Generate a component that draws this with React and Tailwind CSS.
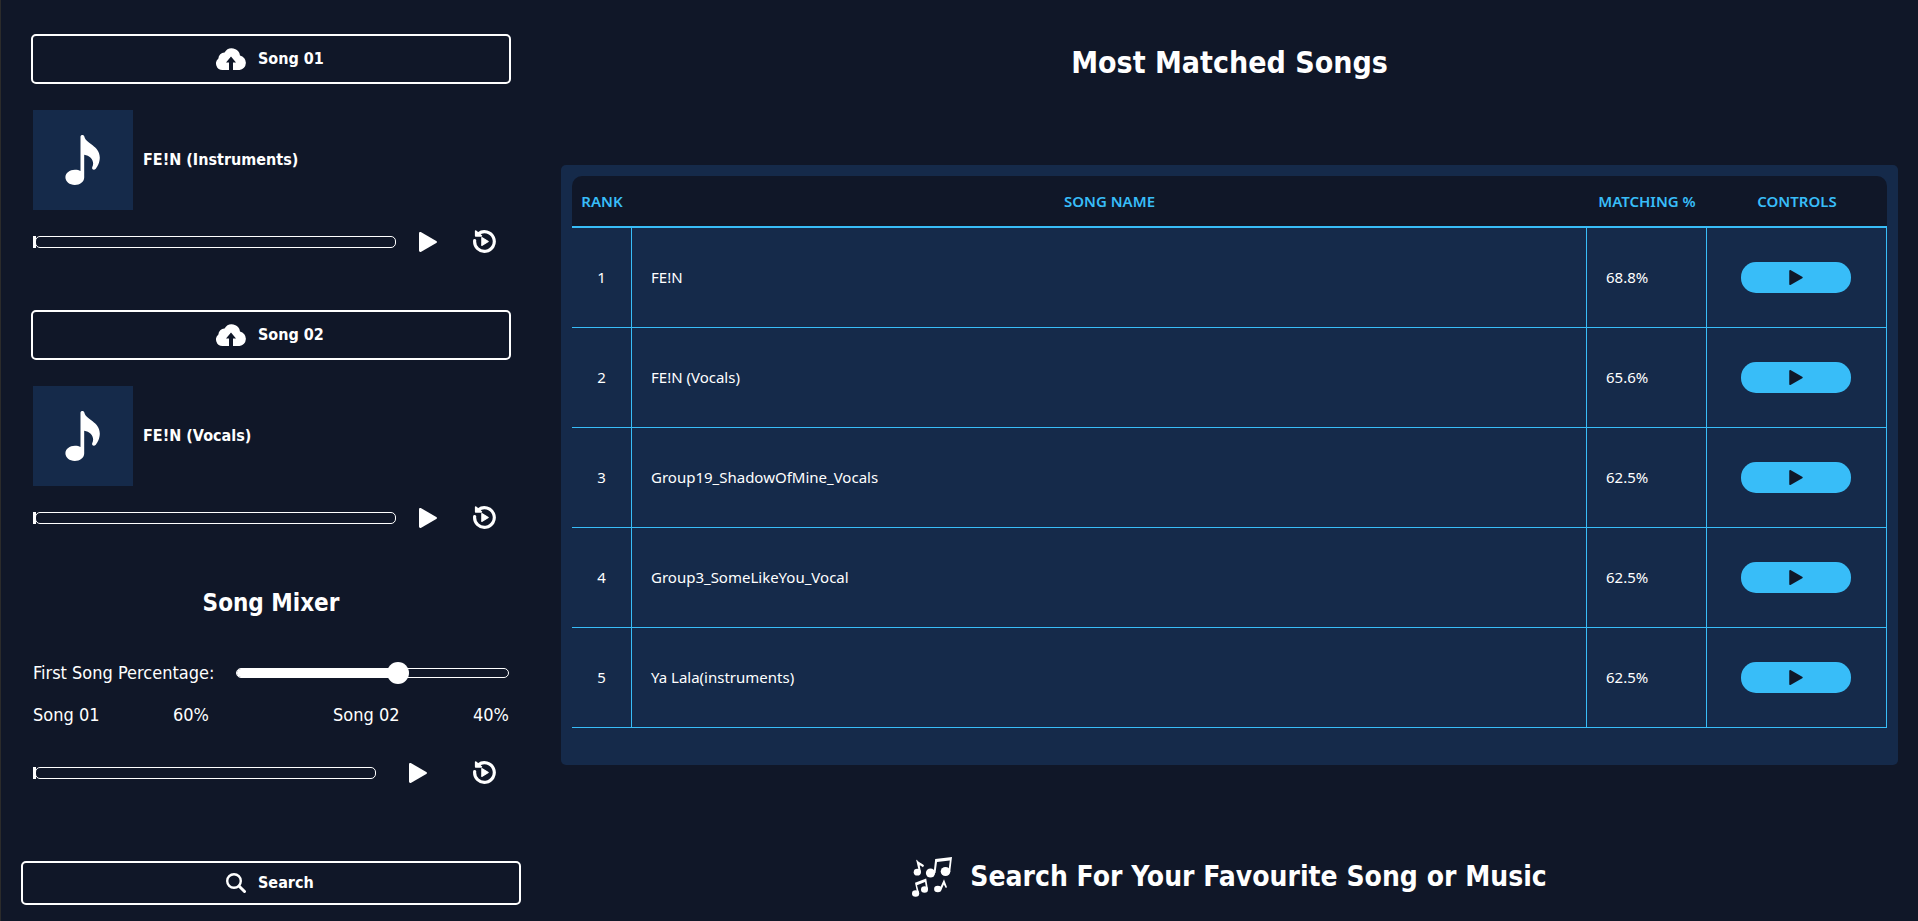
import { useState } from "react";

const FONT_UI = "font-['DejaVu_Sans_Condensed','DejaVu_Sans',sans-serif]";

const SONGS = [
  { name: "FE!N", match: "68.8%" },
  { name: "FE!N (Vocals)", match: "65.6%" },
  { name: "Group19_ShadowOfMine_Vocals", match: "62.5%" },
  { name: "Group3_SomeLikeYou_Vocal", match: "62.5%" },
  { name: "Ya Lala(instruments)", match: "62.5%" },
];

function CloudUploadIcon() {
  return (
    <svg aria-hidden="true" viewBox="0 0 30 22" className="h-[22px] w-[30px]" fill="currentColor">
      <path d="M13 22H6.5A6.5 6.5 0 0 1 2.4 10.5 6 6 0 0 1 8.6 4.6 8.2 8.2 0 0 1 24 7.6 7.3 7.3 0 0 1 23.5 22H17V14.5H20L15 8.5 10 14.5H13Z" />
    </svg>
  );
}

function NoteIcon() {
  return (
    <svg aria-hidden="true" viewBox="0 0 36 50" className="h-[50px] w-9" fill="currentColor">
      <path d="M15.5 1.8C15.5-.4 19-.6 19.4 1.8C21 9 34.8 10.500 34.800 22.500C34.800 27.500 32.500 31.500 30.800 33.700C29 35.800 26.300 34.500 27.300 32C30 26.500 26 20.800 19.200 19.800V42.500C19.200 46.800 15 50 9.800 50C4.500 50 .4 46.700 .4 42.300C.4 38 4.700 34.800 9.900 34.800C12.200 34.800 14.200 35.200 15.500 36Z" />
    </svg>
  );
}

function PlayIcon({ className }) {
  return (
    <svg aria-hidden="true" viewBox="0 0 18 20" className={className} fill="currentColor">
      <path d="M0 1.400C0 .2 1.100-.3 2.200 .3L17.300 9Q18.700 10 17.300 11L2.200 19.700C1.100 20.300 0 19.800 0 18.600Z" />
    </svg>
  );
}

function RestartIcon() {
  return (
    <svg aria-hidden="true" viewBox="0 0 22 22" className="size-[23px]">
      <path d="M1.600 10A9.400 9.400 0 1 0 5.200 3.600" fill="none" stroke="currentColor" strokeWidth="3" strokeLinecap="round" />
      <path d="M2.600 1V5.600H8Z" fill="currentColor" stroke="currentColor" strokeWidth="1.600" strokeLinejoin="round" />
      <path d="M8.400 7.200 14.600 11 8.400 14.800Z" fill="currentColor" stroke="currentColor" strokeLinejoin="round" />
    </svg>
  );
}

function SearchIcon() {
  return (
    <svg aria-hidden="true" viewBox="0 0 20 20" className="size-5" fill="none" stroke="currentColor" strokeLinecap="round">
      <circle cx="8" cy="8" r="6.800" strokeWidth="2.400" />
      <path d="M13.200 13.200 18.500 18.500" strokeWidth="3" />
    </svg>
  );
}

function NotesIcon() {
  return (
    <svg aria-hidden="true" viewBox="0 0 40 40" className="size-10" fill="currentColor">
      <ellipse cx="18.500" cy="16" rx="4.600" ry="4.600" />
      <ellipse cx="33.500" cy="14.500" rx="4.800" ry="4.600" />
      <path d="M21.600 16 23.200 2 40 0 38.200 15H36.300L37.800 3.400 25 5 23.500 16Z" />
      <ellipse cx="5.300" cy="15.200" rx="3.600" ry="3.400" />
      <path d="M7 15 4.200 3 5 2.800C6 5.500 10 6 12 8.500L11 10.200C9.500 9 8.500 8.500 7.700 8.500L8.900 15Z" />
      <ellipse cx="3.600" cy="36.500" rx="3.600" ry="3.300" />
      <ellipse cx="12.500" cy="32.500" rx="3.500" ry="3.300" />
      <path d="M5.300 36.500 3 25.800 14.200 21.500 16 32.500H14.300L13 25 5 28.200 7.200 36.500Z" />
      <ellipse cx="25.800" cy="32" rx="3.700" ry="3.200" />
      <path d="M27.800 31.500 32 22.300 35 30.300 33.800 31 31.800 27.500 29.500 32.800Z" />
    </svg>
  );
}

function Transport({ label, wide }) {
  return (
    <div className="flex items-center">
      <div className="flex h-3 flex-1" role="progressbar" aria-label={label} aria-valuenow={0} aria-valuemin={0} aria-valuemax={100}>
        <div className="-mr-px w-[3px] bg-white" />
        <div className="flex-1 rounded-[5px] border border-white" />
      </div>
      <button type="button" aria-label={`Play ${label}`} className={wide ? "ml-[23px] mr-9" : "ml-[33px] mr-[46px]"}>
        <PlayIcon className="h-5 w-[18px]" />
      </button>
      <button type="button" aria-label={`Restart ${label}`} className="mr-[13px]">
        <RestartIcon />
      </button>
    </div>
  );
}

function SongSlot({ label, title }) {
  return (
    <section className="px-[10px]">
      <button type="button" className="flex h-[50px] w-full items-center gap-3 rounded-[5px] border-2 border-white pl-[183px] font-bold">
        <CloudUploadIcon />
        {label}
      </button>
      <div className="px-0.5">
        <div className="mt-[26px] flex items-center gap-[10px]">
          <div className="flex size-[100px] items-center justify-center bg-[#152a4a]">
            <NoteIcon />
          </div>
          <h3 className="font-bold">{title}</h3>
        </div>
        <div className="mt-5">
          <Transport label={title} wide />
        </div>
      </div>
    </section>
  );
}

export default function App() {
  const [mix, setMix] = useState(60);

  return (
    <div className={`flex min-h-screen gap-10 border-l border-[#2b2b2b] bg-[#101728] pl-5 pr-5 text-base text-white ${FONT_UI}`}>
      <aside className="flex w-[500px] shrink-0 flex-col pb-4 pt-[34px]">
        <SongSlot label="Song 01" title="FE!N (Instruments)" />
        <div className="mt-[57px]">
          <SongSlot label="Song 02" title="FE!N (Vocals)" />
        </div>

        <section className="px-3">
          <h2 className="mt-[58px] text-center text-2xl font-bold">Song Mixer</h2>
          <div className="mt-[42px] flex items-center gap-[22px]">
            <label htmlFor="mix" className="w-[181px] whitespace-nowrap text-[18px] leading-6">First Song Percentage:</label>
            <div className="relative flex h-[22px] flex-1 items-center">
              <div className="h-[10px] w-full overflow-hidden rounded-[5px] border border-white">
                <div className="h-full bg-white" style={{ width: `${mix}%` }} />
              </div>
              <input
                id="mix"
                type="range"
                min="0"
                max="100"
                value={mix}
                onChange={(e) => setMix(Number(e.target.value))}
                className="absolute inset-0 h-full w-full appearance-none bg-transparent [&::-webkit-slider-thumb]:size-[22px] [&::-webkit-slider-thumb]:appearance-none [&::-webkit-slider-thumb]:rounded-full [&::-webkit-slider-thumb]:bg-white"
              />
            </div>
          </div>
          <div className="mt-[18px] flex justify-between text-[18px] leading-6">
            <div className="flex w-[176px] justify-between">
              <span>Song 01</span>
              <span>{mix}%</span>
            </div>
            <div className="flex w-[176px] justify-between">
              <span>Song 02</span>
              <span>{100 - mix}%</span>
            </div>
          </div>
          <div className="mt-[34px]">
            <Transport label="Mix" />
          </div>
        </section>

        <button type="button" className="mt-auto flex h-11 items-center gap-3 rounded-[5px] border-2 border-white pl-[203px] font-bold">
          <SearchIcon />
          Search
        </button>
      </aside>

      <main className="flex flex-1 flex-col pb-6 pt-[43px]">
        <h1 className="text-center text-[30px] font-bold leading-10">Most Matched Songs</h1>

        <div className="mt-[82px] h-[600px] rounded-[5px] bg-[#152a4a] p-[11px] font-['Noto_Sans',sans-serif] text-[15px]">
          <table className="w-full table-fixed border-separate border-spacing-0">
            <thead>
              <tr className="h-[52px] text-[#38bdf8] [&>th]:border-b-2 [&>th]:border-[#38bdf8] [&>th]:bg-[#101728] [&>th]:p-0 [&>th]:font-semibold">
                <th className="w-[60px] rounded-tl-[10px]">RANK</th>
                <th>SONG NAME</th>
                <th className="w-[120px]">MATCHING %</th>
                <th className="w-[180px] rounded-tr-[10px]">CONTROLS</th>
              </tr>
            </thead>
            <tbody>
              {SONGS.map((song, i) => (
                <tr key={song.name} className="h-[100px] [&>td]:border-b [&>td]:border-r [&>td]:border-[#38bdf8]">
                  <td className="text-center">{i + 1}</td>
                  <td className="pl-[19px]">{song.name}</td>
                  <td className="pl-[19px]">{song.match}</td>
                  <td className="pr-0.5">
                    <button type="button" aria-label={`Play ${song.name}`} className="mx-auto flex h-[31px] w-[110px] items-center justify-center rounded-[15px] bg-[#38bdf8] text-[#101728]">
                      <PlayIcon className="h-[15px] w-[14px]" />
                    </button>
                  </td>
                </tr>
              ))}
            </tbody>
          </table>
        </div>

        <div className="mt-auto flex items-center justify-center gap-[18px]">
          <NotesIcon />
          <h2 className="text-[28px] font-bold leading-10">Search For Your Favourite Song or Music</h2>
        </div>
      </main>
    </div>
  );
}
